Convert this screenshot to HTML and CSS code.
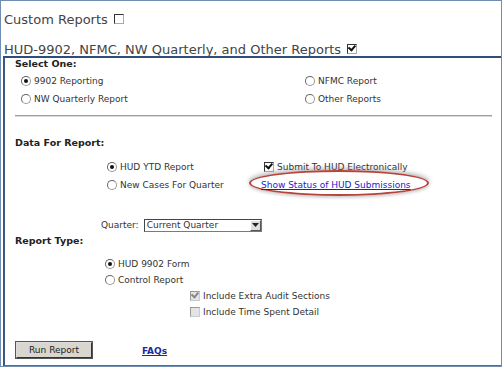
FILE: index.html
```html
<!DOCTYPE html>
<html>
<head>
<meta charset="utf-8">
<link rel="stylesheet" href="styles.css">
</head>
<body>
<div class="frame">
  <div class="title t1">Custom Reports <span class="cb"></span></div>
  <div class="title t2">HUD-9902, NFMC, NW Quarterly, and Other Reports <span class="cb checked"></span></div>
  <div class="panel">
    <div class="label">Select One:</div>
    <div class="select-grid">
      <div class="opt"><span class="rb on"></span>9902 Reporting</div>
      <div class="opt"><span class="rb"></span>NFMC Report</div>
      <div class="opt"><span class="rb"></span>NW Quarterly Report</div>
      <div class="opt"><span class="rb"></span>Other Reports</div>
    </div>
    <div class="rule"></div>
    <div class="label data-label">Data For Report:</div>
    <div class="data-grid">
      <div class="opt"><span class="rb on"></span>HUD YTD Report</div>
      <div class="opt"><span class="cb checked"></span>Submit To HUD Electronically</div>
      <div class="opt"><span class="rb"></span>New Cases For Quarter</div>
      <div class="opt link-cell"><span class="ring"></span><a href="#" class="link">Show Status of HUD Submissions</a></div>
    </div>
    <div class="quarter">
      <span>Quarter:</span>
      <span class="select"><span class="sel-text">Current Quarter</span><span class="sel-btn"><svg width="7" height="4" viewBox="0 0 7 4"><path d="M0 0H7L3.5 4Z" fill="#222"/></svg></span></span>
    </div>
    <div class="label type-label">Report Type:</div>
    <div class="type-list">
      <div class="opt"><span class="rb on"></span>HUD 9902 Form</div>
      <div class="opt"><span class="rb"></span>Control Report</div>
    </div>
    <div class="include-list">
      <div class="opt"><span class="cb dis checked"></span>Include Extra Audit Sections</div>
      <div class="opt"><span class="cb dis"></span>Include Time Spent Detail</div>
    </div>
    <div class="actions">
      <span class="btn">Run Report</span>
      <a href="#" class="faq">FAQs</a>
    </div>
  </div>
</div>
</body>
</html>
```

FILE: styles.css
```css
* { box-sizing: border-box; }
html, body { margin: 0; padding: 0; background: #fff; }
.frame {
  width: 502px;
  height: 367px;
  border: 1px solid #6e8db2;
  background: #fff;
  font-family: "DejaVu Sans", Verdana, sans-serif;
  color: #333;
  display: flex;
  flex-direction: column;
  overflow: hidden;
}
.title {
  font-size: 13px;
  color: #444;
  padding-left: 3px;
  display: flex;
  align-items: center;
  gap: 6px;
  white-space: nowrap;
}
.t1 { height: 22px; margin-top: 7px; }
.t2 { height: 22px; margin-top: 8px; }
.panel {
  flex: 1;
  margin-left: 2px;
  margin-top: -4px;
  border-top: 2px solid #2f4c7c;
  border-left: 2px solid #3a5886;
  border-bottom: 1px solid #4f6f9c;
  padding-left: 10px;
  font-size: 9px;
  color: #333;
}
.label { font-weight: bold; font-size: 9.5px; color: #222; line-height: 12px; }
.opt {
  display: flex;
  align-items: center;
  height: 18px;
  white-space: nowrap;
}
.select-grid {
  display: grid;
  grid-template-columns: 284px auto;
  padding-left: 6px;
  margin-top: 2px;
}
.rb {
  width: 10px; height: 10px;
  border-radius: 50%;
  border: 1px solid #999;
  border-top-color: #666;
  border-left-color: #666;
  background: #fff;
  margin-right: 3px;
  position: relative;
  flex: none;
}
.rb.on::after {
  content: "";
  position: absolute;
  left: 2px; top: 2px;
  width: 4px; height: 4px;
  border-radius: 50%;
  background: #111;
}
.cb {
  width: 10px; height: 10px;
  border: 1px solid #333;
  border-right-color: #aaa;
  border-bottom-color: #aaa;
  background: #fff;
  display: inline-block;
  position: relative;
  flex: none;
  margin-right: 3px;
}
.cb.checked::after {
  content: "";
  position: absolute;
  left: 1px; top: 0px;
  width: 5px; height: 3px;
  border-left: 2px solid #111;
  border-bottom: 2px solid #111;
  transform: rotate(-50deg);
  transform-origin: 3px 3px;
}
.cb.dis { background: #e4e4e4; border-color: #999; border-right-color: #ccc; border-bottom-color: #ccc; }
.cb.dis.checked::after { border-color: #888; }
.rule {
  height: 2px;
  margin: 7px 11px 0 0;
  border-top: 1px solid #9aa0a8;
  border-bottom: 1px solid #d5d9de;
  width: 477px;
}
.data-label { margin-top: 20px; }
.data-grid {
  display: grid;
  grid-template-columns: 157px auto;
  padding-left: 92px;
  margin-top: 9px;
}
.link-cell { position: relative; }
.link { color: #1b1bd0; text-decoration: underline; position: relative; margin-left: -3px; }
.ring {
  position: absolute;
  left: -15px; top: -6px;
  width: 180px; height: 26px;
  border: 2px solid #b8433a;
  border-radius: 50%;
  box-shadow: 0 -2px 4px rgba(120,120,120,0.5), 0 2px 3px rgba(150,150,150,0.4);
}
.quarter {
  display: flex;
  align-items: center;
  gap: 4px;
  padding-left: 86px;
  margin-top: 23px;
  height: 16px;
}
.select {
  width: 118px; height: 13px;
  margin-left: 1px;
  border: 1px solid #7a7a7a;
  border-top-color: #444;
  border-left-color: #444;
  display: flex;
  align-items: center;
  justify-content: space-between;
  background: #fff;
}
.sel-text { padding-left: 2px; }
.sel-btn {
  width: 11px; height: 11px;
  background: #e0ddd6;
  border: 1px solid #fff;
  border-right-color: #555;
  border-bottom-color: #555;
  display: flex; align-items: center; justify-content: center;
}
.type-label { margin-top: 2px; }
.type-list { padding-left: 90px; margin-top: 9px; }
.type-list .opt { height: 16px; }
.include-list { padding-left: 175px; }
.include-list .opt { height: 16px; }
.actions {
  display: flex;
  align-items: center;
  margin-top: 22px;
  gap: 50px;
  padding-left: 1px;
}
.btn {
  width: 76px; height: 16px;
  border: 1px solid #ddd;
  border-right-color: #333;
  border-bottom-color: #333;
  outline: 1px solid #555;
  background: #d9d6cf;
  display: flex; align-items: center; justify-content: center;
  color: #222;
}
.faq { color: #1c2aa0; font-weight: bold; text-decoration: underline; margin-top: 2px; }
```
